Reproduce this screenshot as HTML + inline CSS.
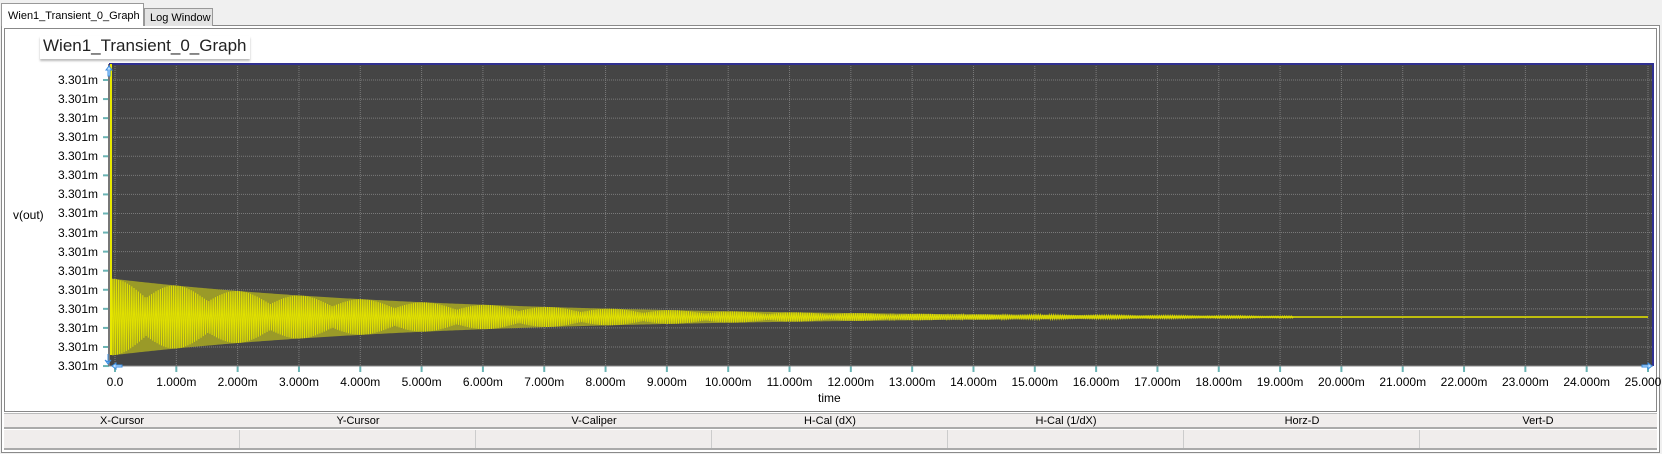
<!DOCTYPE html>
<html><head><meta charset="utf-8"><style>
*{margin:0;padding:0;box-sizing:border-box}
body{width:1662px;height:454px;background:#f0f0f0;position:relative;overflow:hidden;font-family:"Liberation Sans",sans-serif;color:#000}
.abs{position:absolute}
.tab1{left:1px;top:3px;width:143px;height:23px;background:#fff;border:1px solid #999;border-bottom:none;font-size:11px;padding:6px 0 0 6px;z-index:2}
.tab2{left:144px;top:8px;width:69px;height:18px;background:#e3e3e3;border:1px solid #999;border-bottom:none;font-size:11px;padding:3px 0 0 5px}
.frame{left:1px;top:25px;width:1659px;height:428px;background:#fff;border:1px solid #8a8a8a}
.inner{left:4px;top:28px;width:1653px;height:384px;border:1px solid #888;background:#fff}
.ttl{left:40px;top:36px;width:210px;height:23px;font-size:17px;padding-left:3px;background:#fff;box-shadow:0 2px 2px #bbb;color:#222}
.xl{font-size:12px;width:80px;text-align:center}
.hdr{left:4px;top:413px;width:1653px;height:16px;background:#f0edec;border-top:1px solid #bbb;border-bottom:2px solid #aaa;font-size:11px}
.hdr div{position:absolute;top:1px;width:236px;text-align:center}
.row{left:4px;top:430px;width:1653px;height:20px;background:#f0edec;border-bottom:2px solid #aaa}
.row div{position:absolute;top:0;height:18px;border-left:1px solid #ccc}
</style></head><body>
<div class="abs frame"></div>
<div class="abs tab1">Wien1_Transient_0_Graph</div>
<div class="abs tab2">Log Window</div>
<div class="abs inner"></div>
<div class="abs ttl">Wien1_Transient_0_Graph</div>
<div class="abs" style="left:13px;top:208px;font-size:12px">v(out)</div>
<div id="yl"></div>
<div id="xl"></div>
<div class="abs" style="left:818px;top:391px;font-size:12px">time</div>
<svg class="abs" style="left:0;top:0" width="1662" height="454" id="sv"></svg>
<div class="abs hdr">
<div style="left:0">X-Cursor</div><div style="left:236px">Y-Cursor</div><div style="left:472px">V-Caliper</div><div style="left:708px">H-Cal (dX)</div><div style="left:944px">H-Cal (1/dX)</div><div style="left:1180px">Horz-D</div><div style="left:1416px">Vert-D</div>
</div>
<div class="abs row"><div style="left:235px"></div><div style="left:471px"></div><div style="left:707px"></div><div style="left:943px"></div><div style="left:1179px"></div><div style="left:1415px"></div></div>
<script>
var s='';
var L=109,R=1653,T=64,B=366;
s+='<rect x="'+L+'" y="'+T+'" width="'+(R-L)+'" height="'+(B-T)+'" fill="#454545"/>';
var yl='',xl='';
for(var k=0;k<16;k++){var y=80+k*19.07;
 s+='<line x1="'+L+'" x2="'+R+'" y1="'+y+'" y2="'+y+'" stroke="#7a7a7a" stroke-dasharray="1 1"/>';
 s+='<line x1="103" x2="109" y1="'+y+'" y2="'+y+'" stroke="#6ab4b4" stroke-width="2"/>';
 yl+='<div class="abs" style="left:38px;width:60px;text-align:right;font-size:12px;top:'+(y-7)+'px">3.301m</div>';}
for(var i=0;i<=25;i++){var x=115+i*61.32;
 s+='<line y1="'+T+'" y2="'+B+'" x1="'+x+'" x2="'+x+'" stroke="#7a7a7a" stroke-dasharray="1 1"/>';
 s+='<line y1="366" y2="372" x1="'+x+'" x2="'+x+'" stroke="#6ab4b4" stroke-width="2"/>';
 var t=i==0?'0.0':i+'.000m';
 xl+='<div class="abs xl" style="top:375px;left:'+(x-40)+'px">'+t+'</div>';}
s+='<path d="M'+L+' '+T+'V'+B+'" stroke="#777" stroke-width="2"/>';
s+='<path d="M'+L+' '+T+'H'+R+'V'+B+'" stroke="#303090" stroke-width="2" fill="none"/>';
s+='<path d="M'+L+' '+B+'H'+R+'" stroke="#888" stroke-width="1"/>';
function amp(t){return t>19.2?0:38*Math.exp(-t/5.3);}
var up='',dn='';
for(var x=112;x<=1648;x+=2){var t=(x-115)/61.32;var a=Math.max(0.8,amp(t));
 up+=(x==112?'M':'L')+x+' '+(317-a);dn='L'+x+' '+(317+a)+dn;}
s+='<path d="'+up+dn+'Z" fill="#9a9a28"/>';
var p='M112 317';
for(var x=112;x<=1648;x+=1.1){var t=(x-115)/61.32;var a=amp(t);
 var b=0.55+0.45*Math.abs(Math.cos(t*3.1));var sg=(Math.round(x/1.1)%2?1:-1);
 p+='L'+x.toFixed(1)+' '+(317+sg*a*b).toFixed(1);}
s+='<path d="'+p+'" stroke="#e0e000" stroke-width="1" fill="none"/>';
s+='<line x1="1000" x2="1648" y1="317" y2="317" stroke="#d8d800" stroke-width="1.5"/>';
s+='<line x1="111" x2="111" y1="'+T+'" y2="355" stroke="#e8e800" stroke-width="2"/>';
s+='<path d="M109 66 l-3 4 h2 v6 h2 v-6 h2z" fill="#bfe0ff" stroke="#3a8ce0" stroke-width="1"/>';
s+='<path d="M108 354 v8 l-3 -2 l3 4 l3 -4 l-3 2" fill="#bfe0ff" stroke="#3a8ce0" stroke-width="1"/>';
s+='<path d="M112 366 l4 -3 v2 h6 v2 h-6 v2z" fill="#bfe0ff" stroke="#3a8ce0" stroke-width="1"/>';
s+='<path d="M1652 366 l-4 -3 v2 h-6 v2 h6 v2z" fill="#bfe0ff" stroke="#3a8ce0" stroke-width="1"/>';
document.getElementById('sv').innerHTML=s;
document.getElementById('yl').innerHTML=yl;
document.getElementById('xl').innerHTML=xl;
</script>
</body></html>
